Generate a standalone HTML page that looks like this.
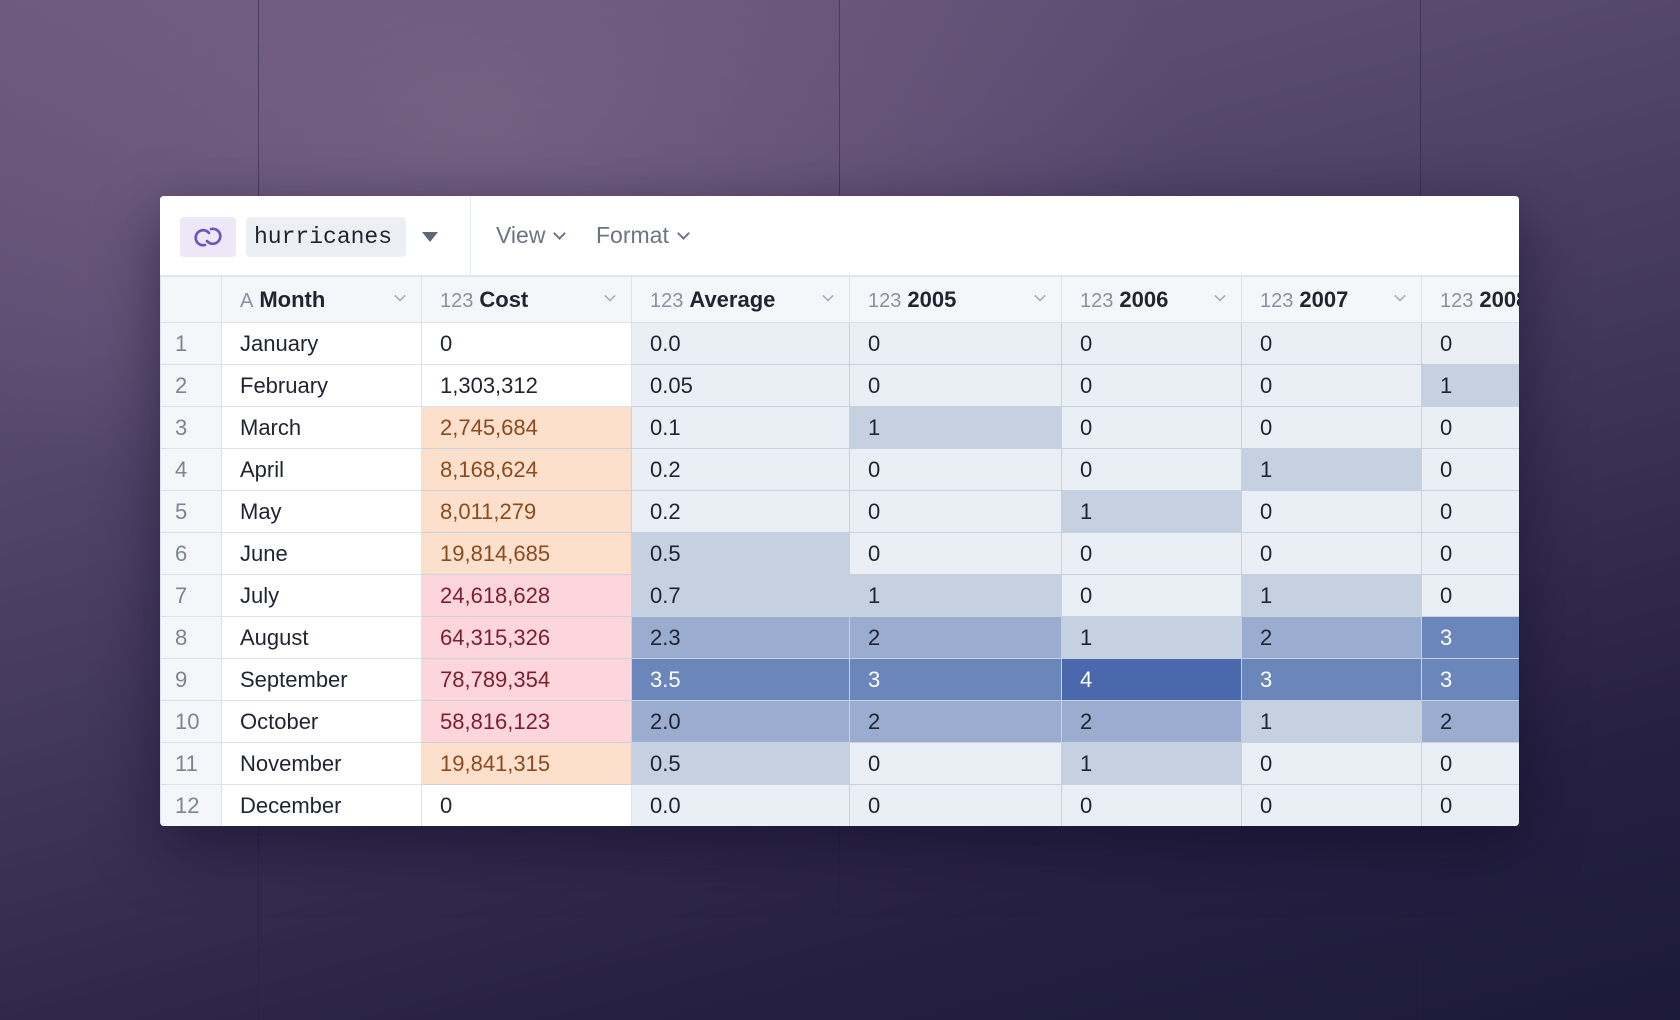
<!DOCTYPE html>
<html><head><meta charset="utf-8"><style>
*{box-sizing:border-box;margin:0;padding:0}
body{width:1680px;height:1020px;overflow:hidden;position:relative;font-family:"Liberation Sans",sans-serif;
background:
radial-gradient(ellipse 700px 420px at 480px 120px,rgba(130,110,140,0.55) 0%,rgba(130,110,140,0) 100%),
linear-gradient(165deg,#6a587c 0%,#5b4b71 25%,#3e3459 55%,#262043 80%,#1d1a37 100%);}
.vl{position:absolute;top:0;bottom:0;width:1px;background:rgba(40,30,70,0.5)}
.panel{position:absolute;left:160px;top:196px;width:1359px;height:630px;background:#fff;border-radius:4px;overflow:hidden;box-shadow:0 20px 60px rgba(10,5,30,0.5)}
.tb{position:absolute;left:0;top:0;width:100%;height:80px;background:#fff;border-bottom:1px solid #e3e7ee}
.ico{position:absolute;left:20px;top:21px;width:56px;height:40px;background:#ece8f8;border-radius:4px}
.name{position:absolute;left:86px;top:21px;width:160px;height:40px;background:#eceff3;border-radius:4px;font-family:"Liberation Mono",monospace;font-size:23px;line-height:40px;padding-left:8px;color:#1f2430}
.tri{position:absolute;left:262px;top:36px;width:0;height:0;border-left:8px solid transparent;border-right:8px solid transparent;border-top:10px solid #5f6678}
.sep{position:absolute;left:310px;top:0;width:1px;height:80px;background:#e3e7ee}
.menu{position:absolute;top:26px;font-size:23px;color:#6d7486}
.menu i{display:inline-block;width:9px;height:9px;border-right:2.5px solid #6d7486;border-bottom:2.5px solid #6d7486;transform:rotate(45deg);margin-left:10px;position:relative;top:-5px}
table{position:absolute;left:0;top:80px;border-collapse:collapse;table-layout:fixed;width:1401px}
td{height:42px;border:1px solid #c9d1dd;font-size:22px;padding-left:18px;color:#1f2430;white-space:nowrap;overflow:hidden}
tr.h td{height:46px;background:#f4f6f9;border-color:#dde2ea;font-weight:bold;font-size:22px;position:relative}
tr.h td .t{font-weight:normal;color:#8a90a0;font-size:20px;margin-right:6px}
tr.h td .c{position:absolute;right:16px;top:14px;width:10px;height:10px;border-right:2px solid #a6adba;border-bottom:2px solid #a6adba;transform:rotate(45deg) scale(.8)}
td.n{background:#f4f6f9;color:#7d8494;padding-left:14px;border-color:#dde2ea}
td.w{background:#fff;border-color:#dde2ea}
.o{background:#fde0cc!important;color:#8a4a1e}
.p{background:#fcd6da!important;color:#7d1e30}
.b0{background:#eaeef5}.b1{background:#c5d0e1}.b2{background:#9bacd1}.b3{background:#6a86bb;color:#fff}.b4{background:#4a69ac;color:#fff}
</style></head><body>
<div class="vl" style="left:258px"></div><div class="vl" style="left:839px"></div><div class="vl" style="left:1420px"></div>
<div class="panel">
<div class="tb">
<div class="ico"><svg width="56" height="40" viewBox="0 0 56 40"><g fill="none" stroke="#6a55c0" stroke-width="2.6" stroke-linecap="round"><path d="M29 16 A7.5 7.5 0 1 0 25 28"/><path d="M27 24 A7.5 7.5 0 1 0 31 12"/></g></svg></div>
<div class="name">hurricanes</div><div class="tri"></div><div class="sep"></div>
<div class="menu" style="left:336px">View<i></i></div>
<div class="menu" style="left:436px">Format<i></i></div>
</div>
<table>
<colgroup><col style="width:61px"><col style="width:200px"><col style="width:210px"><col style="width:218px"><col style="width:212px"><col style="width:180px"><col style="width:180px"><col style="width:140px"></colgroup>
<tr class="h"><td class="n"></td><td><span class="t">A</span>Month<i class="c"></i></td><td><span class="t">123</span>Cost<i class="c"></i></td><td><span class="t">123</span>Average<i class="c"></i></td><td><span class="t">123</span>2005<i class="c"></i></td><td><span class="t">123</span>2006<i class="c"></i></td><td><span class="t">123</span>2007<i class="c"></i></td><td><span class="t">123</span>2008</td></tr>
<tr><td class="n">1</td><td class="w">January</td><td class="w">0</td><td class="b0">0.0</td><td class="b0">0</td><td class="b0">0</td><td class="b0">0</td><td class="b0">0</td></tr>
<tr><td class="n">2</td><td class="w">February</td><td class="w">1,303,312</td><td class="b0">0.05</td><td class="b0">0</td><td class="b0">0</td><td class="b0">0</td><td class="b1">1</td></tr>
<tr><td class="n">3</td><td class="w">March</td><td class="o">2,745,684</td><td class="b0">0.1</td><td class="b1">1</td><td class="b0">0</td><td class="b0">0</td><td class="b0">0</td></tr>
<tr><td class="n">4</td><td class="w">April</td><td class="o">8,168,624</td><td class="b0">0.2</td><td class="b0">0</td><td class="b0">0</td><td class="b1">1</td><td class="b0">0</td></tr>
<tr><td class="n">5</td><td class="w">May</td><td class="o">8,011,279</td><td class="b0">0.2</td><td class="b0">0</td><td class="b1">1</td><td class="b0">0</td><td class="b0">0</td></tr>
<tr><td class="n">6</td><td class="w">June</td><td class="o">19,814,685</td><td class="b1">0.5</td><td class="b0">0</td><td class="b0">0</td><td class="b0">0</td><td class="b0">0</td></tr>
<tr><td class="n">7</td><td class="w">July</td><td class="p">24,618,628</td><td class="b1">0.7</td><td class="b1">1</td><td class="b0">0</td><td class="b1">1</td><td class="b0">0</td></tr>
<tr><td class="n">8</td><td class="w">August</td><td class="p">64,315,326</td><td class="b2">2.3</td><td class="b2">2</td><td class="b1">1</td><td class="b2">2</td><td class="b3">3</td></tr>
<tr><td class="n">9</td><td class="w">September</td><td class="p">78,789,354</td><td class="b3">3.5</td><td class="b3">3</td><td class="b4">4</td><td class="b3">3</td><td class="b3">3</td></tr>
<tr><td class="n">10</td><td class="w">October</td><td class="p">58,816,123</td><td class="b2">2.0</td><td class="b2">2</td><td class="b2">2</td><td class="b1">1</td><td class="b2">2</td></tr>
<tr><td class="n">11</td><td class="w">November</td><td class="o">19,841,315</td><td class="b1">0.5</td><td class="b0">0</td><td class="b1">1</td><td class="b0">0</td><td class="b0">0</td></tr>
<tr><td class="n">12</td><td class="w">December</td><td class="w">0</td><td class="b0">0.0</td><td class="b0">0</td><td class="b0">0</td><td class="b0">0</td><td class="b0">0</td></tr>
</table>
</div>
</body></html>
